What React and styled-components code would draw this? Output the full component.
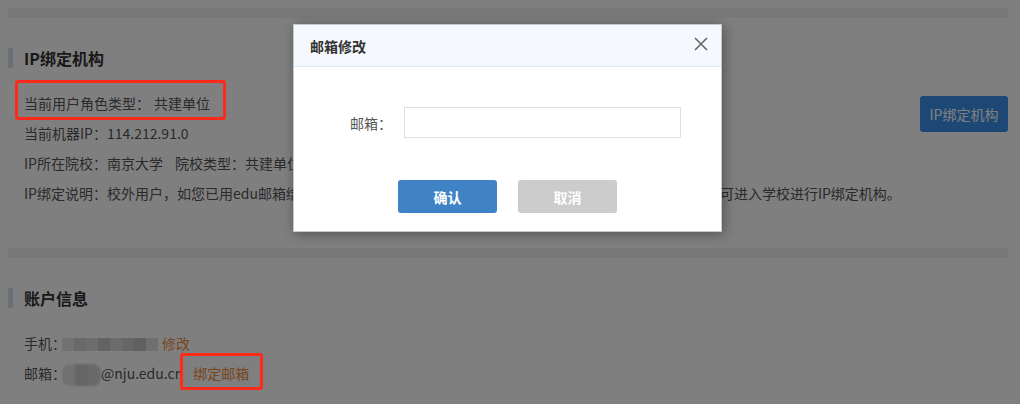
import React from 'react';
import styled, { createGlobalStyle } from 'styled-components';

const GlobalStyle = createGlobalStyle`
  html, body {
    margin: 0;
    padding: 0;
    background: #fff;
    font-family: "Noto Sans CJK SC", "Noto Sans", sans-serif;
    font-size: 14px;
    color: #555;
  }
`;

const phoneShades = ['#e4e4e4', '#d2d2d2', '#dadada', '#c6c6c6', '#d8d8d8', '#cdcdcd', '#c0c0c0', '#dedede'];
const mailShades = ['#e2e2e2', '#cbcbcb', '#d4d4d4'];

const App = () => {
    return (
        <Screen>
            <GlobalStyle />
            <Page>
                <Divider />
                <Section>
                    <Title>IP绑定机构</Title>
                    <InfoRow>
                        <Rows>
                            <Line>当前用户角色类型：<Value>共建单位</Value></Line>
                            <Line>当前机器IP：114.212.91.0</Line>
                            <Line>IP所在院校：南京大学<Gap>院校类型：共建单位</Gap></Line>
                            <Line>IP绑定说明：校外用户，如您已用edu邮箱绑定账户，请直接登录；未绑定的用户请先绑定邮箱，绑定成功后，即可进入学校进行IP绑定机构。</Line>
                        </Rows>
                        <BindButton>IP绑定机构</BindButton>
                    </InfoRow>
                </Section>
                <Divider $top={40} />
                <Section>
                    <Title>账户信息</Title>
                    <Rows $top={20}>
                        <Line>
                            手机：
                            <Mosaic>
                                {phoneShades.map((c, i) => <Tile key={i} $shade={c} />)}
                            </Mosaic>
                            <Link>修改</Link>
                        </Line>
                        <Line>
                            邮箱：
                            <Blob>
                                {mailShades.map((c, i) => <BlobTile key={i} $shade={c} />)}
                            </Blob>
                            @nju.edu.cn
                            <Link $gap={10}>绑定邮箱</Link>
                        </Line>
                    </Rows>
                </Section>
            </Page>

            <Mask />

            <Modal>
                <ModalHead>
                    <ModalTitle>邮箱修改</ModalTitle>
                    <Close aria-label="关闭">
                        <svg width="14" height="14" viewBox="0 0 14 14">
                            <path d="M1 1L13 13M13 1L1 13" stroke="#666" strokeWidth="1.6" fill="none" />
                        </svg>
                    </Close>
                </ModalHead>
                <ModalBody>
                    <Field>
                        <FieldLabel>邮箱：</FieldLabel>
                        <Input type="text" />
                    </Field>
                    <Actions>
                        <ActionButton $primary>确认</ActionButton>
                        <ActionButton>取消</ActionButton>
                    </Actions>
                </ModalBody>
            </Modal>

            <Marker $left={15} $top={80} $w={211} $h={40} />
            <Marker $left={180} $top={353} $w={83} $h={37} />
        </Screen>
    );
};

const Screen = styled.div`
    position: relative;
    width: 1020px;
    height: 404px;
    overflow: hidden;
`;

const Page = styled.div`
    padding: 8px 12px 0 8px;
`;

const Divider = styled.div`
    height: 10px;
    margin-top: ${p => p.$top || 0}px;
    background: #f0f0f0;
`;

const Section = styled.div`
    padding-top: 30px;
`;

const Title = styled.div`
    height: 20px;
    line-height: 20px;
    border-left: 5px solid #d4def0;
    padding-left: 11px;
    font-size: 16px;
    font-weight: bold;
    color: #333;
`;

const InfoRow = styled.div`
    display: flex;
    justify-content: space-between;
    align-items: flex-start;
`;

const Rows = styled.div`
    margin-top: ${p => p.$top || 20}px;
    padding-left: 16px;
`;

const Line = styled.div`
    display: flex;
    align-items: center;
    height: 30px;
    white-space: nowrap;
`;

const Value = styled.span`
    margin-left: 4px;
`;

const Gap = styled.span`
    margin-left: 12px;
`;

const BindButton = styled.button`
    margin-top: 28px;
    width: 88px;
    height: 36px;
    border: none;
    border-radius: 3px;
    background: #3a90ea;
    color: #fff;
    font-family: inherit;
    font-size: 14px;
    padding: 0;
`;

const Mosaic = styled.span`
    display: inline-flex;
    height: 13px;
    margin: 2px 0 0 -4px;
`;

const Tile = styled.span`
    width: 12px;
    height: 13px;
    background: ${p => p.$shade};
`;

const Blob = styled.span`
    display: inline-flex;
    height: 22px;
    margin: 4px 0 0 -4px;
    border-radius: 8px;
    overflow: hidden;
    filter: blur(1px);
`;

const BlobTile = styled.span`
    width: 13px;
    height: 22px;
    background: ${p => p.$shade};
`;

const Link = styled.span`
    margin-left: ${p => p.$gap || 4}px;
    color: #f08c3c;
    cursor: pointer;
`;

const Mask = styled.div`
    position: absolute;
    inset: 0;
    background: rgba(0, 0, 0, 0.5);
`;

const Modal = styled.div`
    position: absolute;
    left: 293px;
    top: 24px;
    width: 429px;
    height: 208px;
    box-sizing: border-box;
    background: #fff;
    border: 1px solid #c8c8c8;
    box-shadow: 2px 2px 12px rgba(0, 0, 0, 0.35);
`;

const ModalHead = styled.div`
    display: flex;
    align-items: center;
    justify-content: space-between;
    height: 41px;
    padding: 0 13px 0 16px;
    background: #f5f9fd;
    border-bottom: 1px solid #d9eafa;
`;

const ModalTitle = styled.div`
    font-size: 14px;
    font-weight: bold;
    color: #333;
`;

const Close = styled.span`
    display: flex;
    margin-top: -3px;
`;

const ModalBody = styled.div`
    padding-top: 40px;
`;

const Field = styled.div`
    display: flex;
    align-items: center;
`;

const FieldLabel = styled.label`
    width: 98px;
    text-align: right;
    color: #555;
`;

const Input = styled.input`
    margin-left: 12px;
    width: 277px;
    height: 31px;
    box-sizing: border-box;
    border: 1px solid #dedede;
    outline: none;
`;

const Actions = styled.div`
    display: flex;
    justify-content: center;
    gap: 21px;
    margin-top: 42px;
`;

const ActionButton = styled.button`
    width: 99px;
    height: 33px;
    border: none;
    border-radius: 3px;
    background: ${p => (p.$primary ? '#3f83c5' : '#cccccc')};
    color: #fff;
    font-family: inherit;
    font-size: 14px;
    font-weight: bold;
    padding: 0;
`;

const Marker = styled.div`
    position: absolute;
    left: ${p => p.$left}px;
    top: ${p => p.$top}px;
    width: ${p => p.$w}px;
    height: ${p => p.$h}px;
    box-sizing: border-box;
    border: 3px solid #ff2a1a;
    border-radius: 3px;
`;

export default App;
